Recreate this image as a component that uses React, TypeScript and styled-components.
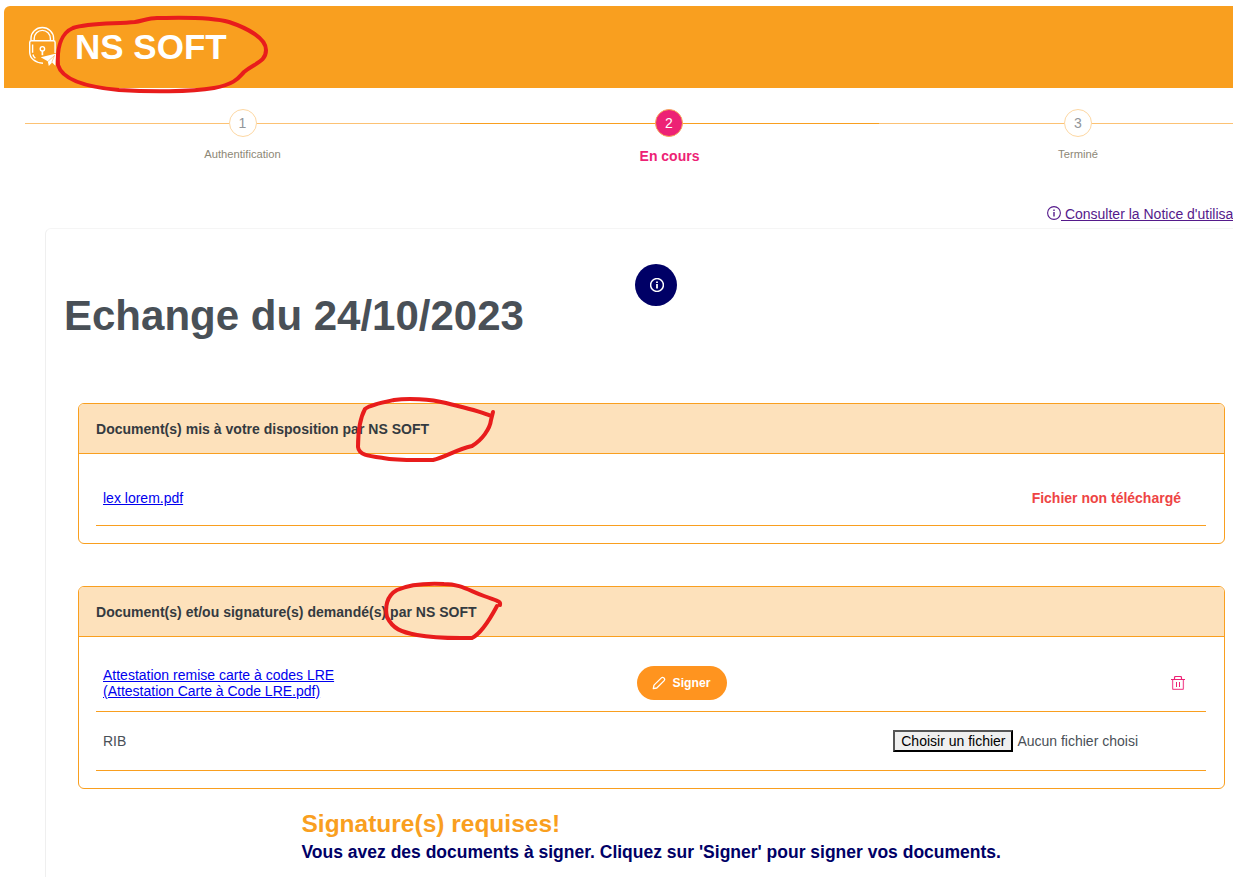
import React from 'react';
import styled, { createGlobalStyle, css } from 'styled-components';

const orange = '#f99f1f';
const pink = '#ed2275';
const navy = '#000066';
const textColor = '#495057';

const GlobalStyle = createGlobalStyle`
  * { box-sizing: border-box; }
  body {
    margin: 0;
    background: #fff;
    color: ${textColor};
    font-family: "Liberation Sans", Arial, Helvetica, sans-serif;
    font-size: 14px;
    line-height: 16px;
    overflow: hidden;
  }
`;

const Page = styled.div`
  position: relative;
  width: 100%;
  height: 877px;
  padding: 6px 0 0 4px;
  overflow: hidden;
`;

const Header = styled.header`
  display: flex;
  align-items: flex-start;
  height: 82px;
  padding: 20px 0 0 24px;
  background: ${orange};
  border-top-left-radius: 6px;
`;

const Brand = styled.h1`
  margin: 1px 0 0 17px;
  color: #fff;
  font-size: 35px;
  line-height: 40px;
  font-weight: 700;
`;

const Steps = styled.ol`
  display: grid;
  grid-template-columns: 435px 419px 398px;
  width: 1252px;
  height: 84px;
  margin: 21px 0 0 21px;
  padding: 0;
  list-style: none;
`;

const Step = styled.li<{ $active?: boolean }>`
  display: flex;
  flex-direction: column;
  align-items: center;
  background: linear-gradient(${orange}, ${orange}) 0 14px / 100% 1px no-repeat;
  ${({ $active }) =>
    !$active &&
    css`
      background-image: linear-gradient(#fcc274, #fcc274);
    `}
`;

const StepNumber = styled.span<{ $active?: boolean }>`
  width: 28px;
  height: 28px;
  margin-right: ${({ $active }) => ($active ? 1 : 0)}px;
  border: 1px solid ${({ $active }) => ($active ? '#f7a95a' : '#fdd7a2')};
  border-radius: 50%;
  background: ${({ $active }) => ($active ? pink : '#fff')};
  color: ${({ $active }) => ($active ? '#fff' : '#92969a')};
  line-height: 27px;
  text-align: center;
`;

const StepLabel = styled.span<{ $active?: boolean }>`
  margin-top: ${({ $active }) => ($active ? 11 : 9)}px;
  color: ${({ $active }) => ($active ? pink : '#8d8776')};
  font-size: ${({ $active }) => ($active ? 14 : 11.2)}px;
  font-weight: ${({ $active }) => ($active ? 700 : 400)};
`;

const NoticeBar = styled.div`
  display: flex;
  height: 35px;
  padding: 13px 0 0 1043px;
  white-space: nowrap;
`;

const NoticeLink = styled.a`
  display: flex;
  color: #551a8b;
  text-decoration: underline;
  white-space: pre;
`;

const Panel = styled.main`
  width: 1240px;
  height: 700px;
  margin: 0 0 0 41px;
  padding: 35px 0 0 19px;
  border: 1px solid #f5f5f5;
  border-left-color: #efefef;
  border-radius: 6px;
`;

const TitleRow = styled.div`
  display: flex;
  align-items: flex-start;
  height: 139px;
`;

const Title = styled.h2`
  width: 571px;
  margin: 28px 0 0 -1px;
  font-size: 42px;
  line-height: 48px;
  font-weight: 700;
`;

const InfoButton = styled.button`
  display: flex;
  align-items: center;
  justify-content: center;
  width: 42px;
  height: 42px;
  padding: 0 0 0 1px;
  border: 0;
  border-radius: 50%;
  background: ${navy};
  color: #fff;
`;

const Card = styled.section`
  width: 1147px;
  margin: 0 0 42px 13px;
  padding-bottom: 17px;
  border: 1px solid ${orange};
  border-radius: 6px;
  overflow: hidden;
`;

const CardHeader = styled.h3`
  height: 50px;
  margin: 0;
  padding: 17px;
  background: #fde1bb;
  border-bottom: 1px solid ${orange};
  color: #343a40;
  font-size: 14px;
  line-height: 16px;
  letter-spacing: 0.02px;
`;

const Row = styled.div<{ $height: number; $offset?: number }>`
  display: grid;
  grid-template-columns: 534px 1fr auto;
  align-items: center;
  height: ${({ $height }) => $height}px;
  margin: ${({ $offset = 0 }) => $offset}px 18px 0 17px;
  padding-left: 7px;
  border-bottom: 1px solid ${orange};
`;

const FileLink = styled.a`
  color: #0000ee;
  text-decoration: underline;
`;

const Status = styled.span`
  margin-right: 25px;
  color: #ee4444;
  font-weight: 700;
`;

const SignButton = styled.button`
  display: flex;
  align-items: center;
  width: 90px;
  height: 34px;
  padding: 0 0 0 15px;
  gap: 5.5px;
  border: 0;
  border-radius: 17px;
  background: #ff941f;
  color: #fff;
  font: 700 12.2px/16px "Liberation Sans", Arial, sans-serif;
`;

const TrashButton = styled.button`
  display: flex;
  margin-right: 21px;
  padding: 0;
  border: 0;
  background: none;
  color: ${pink};
`;

const FilePicker = styled.div`
  display: flex;
  align-items: center;
  gap: 4px;
  margin-right: 68px;
`;

const ChooseButton = styled.button`
  width: 120px;
  height: 22px;
  padding: 0;
  border: 2px outset #000;
  background: #efefef;
  color: #000;
  font: 14px/16px "Liberation Sans", Arial, sans-serif;
  white-space: nowrap;
`;

const Message = styled.div`
  margin: -21px 0 0 236.5px;
  font-weight: 700;
`;

const MessageTitle = styled.p`
  margin: 0;
  color: ${orange};
  font-size: 24.5px;
  line-height: 28px;
`;

const MessageText = styled.p`
  margin: 4px 0 0;
  color: ${navy};
  font-size: 17.5px;
  line-height: 20px;
`;

const Annotations = styled.svg`
  position: absolute;
  top: 0;
  left: 0;
  pointer-events: none;
`;

const InfoIcon = ({ weight = 1.1 }: { weight?: number }) => (
  <svg width="14" height="14" viewBox="0 0 14 14" fill="none" stroke="currentColor">
    <circle cx="7" cy="7" r="6.4" strokeWidth={weight} />
    <path d="M7 6v4.4M7 3.4v1.5" strokeWidth={weight + 0.3} />
  </svg>
);

const PencilIcon = () => (
  <svg width="15" height="14" viewBox="0 0 15 14" fill="none" stroke="currentColor" strokeWidth="1.3" strokeLinejoin="round">
    <path d="M1.3 12.7l.7-3.6 7.4-7.2c.7-.7 1.7-.7 2.4 0l.4.4c.7.7.7 1.6 0 2.3L4.8 12z" />
  </svg>
);

const TrashIcon = () => (
  <svg width="14" height="14" viewBox="0 0 14 14" fill="none" stroke="currentColor" strokeLinejoin="round">
    <path d="M0 3.5h14M3.5 3.5V1.7Q3.5.5 4.7.5h4.6q1.2 0 1.2 1.2v1.8" strokeWidth="1.2" />
    <path d="M1.6 3.5v8.7q0 1.3 1.3 1.3h8.2q1.3 0 1.3-1.3V3.5" strokeWidth="1.3" strokeOpacity=".75" />
    <path d="M5.5 6v5M8.5 6v5" />
  </svg>
);

const LockLogo = () => (
  <svg width="30" height="42" viewBox="0 0 30 42" fill="none" stroke="#fff" strokeWidth="1.4">
    <path d="M3 14.6V12.3a11.3 10.8 0 0 1 22.6 0v2.3M6.2 14.6V12.6a8.1 8.2 0 0 1 16.2 0v2" />
    <path d="M15 37.2C7 36.6 1.7 32.2 1.7 26V16.4q0-1.7 1.7-1.7h22q1.7 0 1.7 1.7V27" />
    <path d="M4.6 18.5v8.2M4.9 28.5c.4 1.6 1.2 2.8 2.5 3.8" />
    <circle cx="14.4" cy="22.8" r="2.2" />
    <path d="M14.4 25v4.2" strokeWidth="1.7" />
    <path d="M12.7 31.2L28.4 27.6 27.3 39.8 24.2 36.4 20.8 39.9 19.8 35.2z" fill="#fff" stroke="none" />
    <path d="M26.5 29.5l-6.5 5.8M26.5 29.5l-2.8 7" stroke={orange} strokeWidth=".5" />
  </svg>
);

export default function App() {
  return (
    <>
      <GlobalStyle />
      <Page>
        <Header>
          <LockLogo />
          <Brand>NS SOFT</Brand>
        </Header>

        <Steps>
          <Step>
            <StepNumber>1</StepNumber>
            <StepLabel>Authentification</StepLabel>
          </Step>
          <Step $active>
            <StepNumber $active>2</StepNumber>
            <StepLabel $active>En cours</StepLabel>
          </Step>
          <Step>
            <StepNumber>3</StepNumber>
            <StepLabel>Terminé</StepLabel>
          </Step>
        </Steps>

        <NoticeBar>
          <NoticeLink>
            <InfoIcon />
            <span> Consulter la Notice d'utilisation</span>
          </NoticeLink>
        </NoticeBar>

        <Panel>
          <TitleRow>
            <Title>Echange du 24/10/2023</Title>
            <InfoButton aria-label="Informations">
              <InfoIcon weight={1.5} />
            </InfoButton>
          </TitleRow>

          <Card>
            <CardHeader>Document(s) mis à votre disposition par NS SOFT</CardHeader>
            <Row $height={55} $offset={17}>
              <FileLink>lex lorem.pdf</FileLink>
              <span />
              <Status>Fichier non téléchargé</Status>
            </Row>
          </Card>

          <Card>
            <CardHeader>Document(s) et/ou signature(s) demandé(s) par NS SOFT</CardHeader>
            <Row $height={58} $offset={17}>
              <FileLink>
                Attestation remise carte à codes LRE
                <br />
                (Attestation Carte à Code LRE.pdf)
              </FileLink>
              <SignButton>
                <PencilIcon />
                Signer
              </SignButton>
              <TrashButton aria-label="Supprimer">
                <TrashIcon />
              </TrashButton>
            </Row>
            <Row $height={59}>
              <span>RIB</span>
              <span />
              <FilePicker>
                <ChooseButton>Choisir un fichier</ChooseButton>
                <span>Aucun fichier choisi</span>
              </FilePicker>
            </Row>
          </Card>

          <Message>
            <MessageTitle>Signature(s) requises!</MessageTitle>
            <MessageText>Vous avez des documents à signer. Cliquez sur 'Signer' pour signer vos documents.</MessageText>
          </Message>
        </Panel>

        <Annotations width="1233" height="877" fill="none" stroke="#e81c1c" strokeWidth="4" strokeLinecap="round" strokeLinejoin="round">
          <path d="M135 22C115 24 88 23 73 28C61 33 57 48 58 65C62 79 85 87 119 90C150 92 190 92 214 88C236 84 239 77 244 72C255 63 266 62 266 50C266 38 247 28 229 22C208 16 171 18 157 18C149 18 142 21 135 22" />
          <path d="M491 416C480 411 470 409 446 403C430 399 408 398 394 400C380 403 370 405 365 409C359 420 358 433 358 447C359 455 368 456 383 458C399 461 420 460 433 460C446 457 455 450 472 446C482 440 490 429 491 420L493 412" />
          <path d="M500 605C501 601 497 601 484 596C468 590 460 584 444 584C423 583 408 585 397 590C386 596 385 608 387 617C393 629 401 632 417 635C438 639 463 638 472 638C480 634 489 621 497 606" />
        </Annotations>
      </Page>
    </>
  );
}
